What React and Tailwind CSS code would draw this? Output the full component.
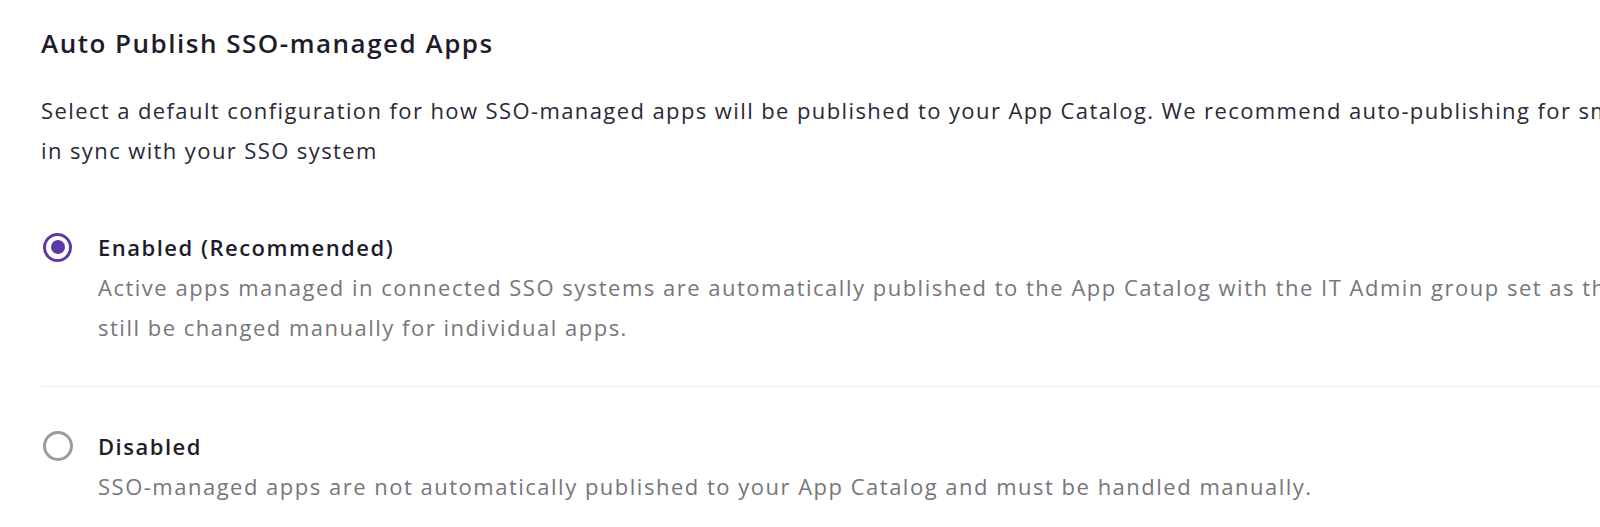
import { useState } from 'react'

const options = [
  {
    id: 'enabled',
    label: 'Enabled (Recommended)',
    lines: [
      'Active apps managed in connected SSO systems are automatically published to the App Catalog with the IT Admin group set as the default owner. This can',
      'still be changed manually for individual apps.',
    ],
  },
  {
    id: 'disabled',
    label: 'Disabled',
    lines: ['SSO-managed apps are not automatically published to your App Catalog and must be handled manually.'],
  },
]

function Radio({ checked }) {
  if (checked) {
    return (
      <span className="flex h-[29px] w-[29px] items-center justify-center rounded-full border-[3px] border-[#5b3aa8]">
        <span className="h-[14px] w-[14px] rounded-full bg-[#5b3aa8]" />
      </span>
    )
  }
  return <span className="block h-[30px] w-[30px] rounded-full border-[3px] border-[#9b9b9b]" />
}

export default function App() {
  const [selected, setSelected] = useState('enabled')

  return (
    <div className="h-[527px] w-[1600px] overflow-hidden bg-white pl-[41px] pt-[27px] font-['Open_Sans',sans-serif]">
      <h2 className="whitespace-nowrap text-[26px] font-semibold leading-[32px] tracking-[1.5px] text-[#1d1c2b]">
        Auto Publish SSO-managed Apps
      </h2>
      <p className="mt-[31px] whitespace-nowrap text-[22px] leading-[40px] tracking-[1.4px] text-[#2a2937]">
        Select a default configuration for how SSO-managed apps will be published to your App Catalog. We recommend auto-publishing for smooth management
        <br />
        in sync with your SSO system
      </p>

      <div className="mt-[18px]">
        {options.map((opt, i) => (
          <div
            key={opt.id}
            onClick={() => setSelected(opt.id)}
            className={`flex cursor-pointer py-[39px] ${i > 0 ? 'border-t border-[#ebebeb]' : ''}`}
          >
            <div className="flex h-[40px] w-[57px] shrink-0 items-center pl-[2px]">
              <Radio checked={selected === opt.id} />
            </div>
            <div className="whitespace-nowrap">
              <div className="text-[22px] font-semibold leading-[40px] tracking-[1.5px] text-[#1d1c2b]">{opt.label}</div>
              <div className="text-[22px] leading-[40px] tracking-[1.5px] text-[#77767b]">
                {opt.lines.map((line) => (
                  <div key={line}>{line}</div>
                ))}
              </div>
            </div>
          </div>
        ))}
      </div>
    </div>
  )
}
